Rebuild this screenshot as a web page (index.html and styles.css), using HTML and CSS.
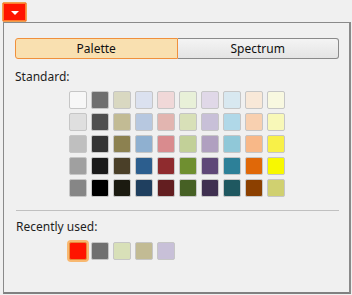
FILE: index.html
```html
<!DOCTYPE html>
<html>
<head>
<meta charset="utf-8">
<link rel="stylesheet" href="styles.css">
</head>
<body>
<div class="trigger"><span class="arrow"></span></div>
<div class="panel">
  <div class="tabs">
    <div class="tab active">Palette</div>
    <div class="tab">Spectrum</div>
  </div>
  <div class="label">Standard:</div>
  <div class="grid">
    <span class="sw" style="background:#f7f7f7"></span><span class="sw" style="background:#6f6f6f"></span><span class="sw" style="background:#d9d8c1"></span><span class="sw" style="background:#dbe1ef"></span><span class="sw" style="background:#f0d8d8"></span><span class="sw" style="background:#e8f0d8"></span><span class="sw" style="background:#e0d8e8"></span><span class="sw" style="background:#d8e8f0"></span><span class="sw" style="background:#f8e8d8"></span><span class="sw" style="background:#f8f8e0"></span>
    <span class="sw" style="background:#dfdfdf"></span><span class="sw" style="background:#4f4f4f"></span><span class="sw" style="background:#c2bb94"></span><span class="sw" style="background:#b7c8e0"></span><span class="sw" style="background:#e2b5b0"></span><span class="sw" style="background:#d8e0b8"></span><span class="sw" style="background:#c8c0d8"></span><span class="sw" style="background:#b0d8e8"></span><span class="sw" style="background:#f8d0b0"></span><span class="sw" style="background:#f8f8b8"></span>
    <span class="sw" style="background:#bfbfbf"></span><span class="sw" style="background:#343434"></span><span class="sw" style="background:#8c8150"></span><span class="sw" style="background:#8fb0d0"></span><span class="sw" style="background:#d98b8e"></span><span class="sw" style="background:#c2d098"></span><span class="sw" style="background:#b0a0c0"></span><span class="sw" style="background:#90c8d8"></span><span class="sw" style="background:#f8b888"></span><span class="sw" style="background:#f8f048"></span>
    <span class="sw" style="background:#a0a0a0"></span><span class="sw" style="background:#1a1a1a"></span><span class="sw" style="background:#4a3f28"></span><span class="sw" style="background:#2c5e8e"></span><span class="sw" style="background:#8f2b2e"></span><span class="sw" style="background:#6f8f30"></span><span class="sw" style="background:#5f4878"></span><span class="sw" style="background:#2d8098"></span><span class="sw" style="background:#e06808"></span><span class="sw" style="background:#f8f800"></span>
    <span class="sw" style="background:#868686"></span><span class="sw" style="background:#000000"></span><span class="sw" style="background:#1b1a10"></span><span class="sw" style="background:#1f3f5f"></span><span class="sw" style="background:#631e20"></span><span class="sw" style="background:#466024"></span><span class="sw" style="background:#3f3050"></span><span class="sw" style="background:#1f5860"></span><span class="sw" style="background:#8c4000"></span><span class="sw" style="background:#d0d070"></span>
  </div>
  <div class="sep"></div>
  <div class="label label2">Recently used:</div>
  <div class="recent">
    <span class="sw selected" style="background:#ff1400"></span><span class="sw" style="background:#707070"></span><span class="sw" style="background:#d8e0b8"></span><span class="sw" style="background:#c2bb94"></span><span class="sw" style="background:#c8c0d8"></span>
  </div>
</div>
</body>
</html>
```

FILE: styles.css
```css
html, body {
  margin: 0;
  background: #f0f0f0;
}
body {
  padding: 2px 0 0 2px;
  font-family: "Noto Sans", "DejaVu Sans", sans-serif;
  font-size: 12px;
  color: #1e1e1e;
}
.trigger {
  box-sizing: border-box;
  width: 25px;
  height: 20px;
  background: #ff1400;
  border: 1px solid #f0a050;
  box-shadow: inset 0 0 0 1px #ff7a30;
  border-radius: 2px;
  display: flex;
  align-items: center;
  justify-content: center;
}
.arrow {
  width: 0;
  height: 0;
  border-left: 4px solid transparent;
  border-right: 4px solid transparent;
  border-top: 4px solid #ffffff;
  margin-top: 1px;
}
.panel {
  box-sizing: border-box;
  margin-left: 1px;
  width: 348px;
  height: 272px;
  border: 1px solid #8a8a8a;
  border-bottom: 2px solid #808080;
  border-right: 2px solid #8a8a8a;
  padding: 15px 0 0 11px;
}
.tabs {
  display: flex;
  width: 324px;
  height: 21px;
}
.tab {
  box-sizing: border-box;
  flex: 1;
  display: flex;
  align-items: center;
  justify-content: center;
  border: 1px solid #8a8a8a;
  background: linear-gradient(#f4f4f4, #e4e4e4);
  font-size: 12px;
  color: #101010;
}
.tab:first-child {
  border-radius: 3px 0 0 3px;
}
.tab:last-child {
  border-radius: 0 3px 3px 0;
  border-left: none;
}
.tab.active {
  background: #f9e0b0;
  border-color: #f0903c;
}
.label {
  margin-top: 10px;
  line-height: 15px;
}
.grid {
  margin: 7px 0 0 54px;
  display: grid;
  grid-template-columns: repeat(10, 18px);
  grid-auto-rows: 18px;
  gap: 4px;
}
.sw {
  box-sizing: border-box;
  width: 18px;
  height: 18px;
  border: 1px solid #c6c6c6;
  border-radius: 2px;
  display: block;
}
.sep {
  margin: 13px 0 0 1px;
  width: 323px;
  height: 1px;
  background: #c0c0c0;
}
.label2 {
  margin-top: 8px;
  margin-left: 1px;
}
.recent {
  margin: 8px 0 0 54px;
  display: flex;
  gap: 4px;
}
.sw.selected {
  border-color: #e8883a;
  box-shadow: 0 0 0 2px #f8b870;
}
```
